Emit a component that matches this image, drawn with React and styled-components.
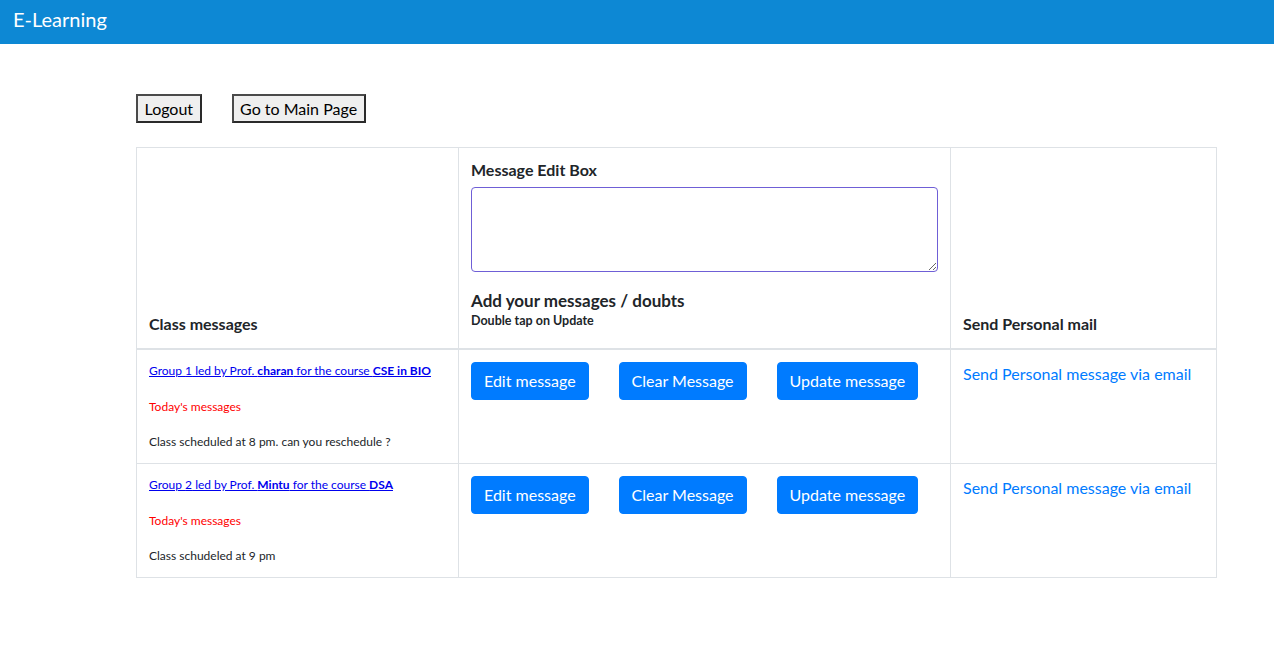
import React from "react";
import styled, { createGlobalStyle } from "styled-components";

const FONT = `Lato, "Noto Sans", "Liberation Sans", sans-serif`;

const Global = createGlobalStyle`
  html, body { margin: 0; padding: 0; background: #fff; }
  body {
    font-family: ${FONT};
    font-size: 16px;
    line-height: 1.5;
    color: #212529;
  }
  * { box-sizing: border-box; }
`;

const TopBar = styled.header`
  height: 44px;
  background: #0d88d4;
  display: flex;
  align-items: flex-start;
  padding: 4px 13px 0;
`;

const Brand = styled.div`
  color: #fff;
  font-size: 20px;
  line-height: 30px;
`;

const Main = styled.main`
  padding: 50px 0 0 136px;
`;

const ActionRow = styled.div`
  display: flex;
  gap: 30px;
  margin-bottom: 24px;
`;

const PlainButton = styled.button`
  font-family: ${FONT};
  font-size: 16px;
  line-height: 21px;
  color: #000;
  background: #efefef;
  border: 2px solid #4a4a4a;
  border-right-color: #2a2a2a;
  border-bottom-color: #2a2a2a;
  padding: 2px 6.5px;
  height: 29px;
  cursor: pointer;
`;

const Table = styled.table`
  width: 1080px;
  border-collapse: collapse;
  table-layout: fixed;
`;

const HeadCell = styled.th`
  border: 1px solid #dee2e6;
  border-bottom: 2px solid #dee2e6;
  padding: 12px;
  vertical-align: bottom;
  text-align: left;
  font-weight: 700;
`;

const Cell = styled.td`
  border: 1px solid #dee2e6;
  padding: 12px;
  vertical-align: top;
`;

const FieldLabel = styled.label`
  display: block;
  font-weight: 700;
  line-height: 20px;
`;

const EditBox = styled.textarea`
  display: block;
  width: 100%;
  height: 85px;
  margin-top: 7px;
  border: 1px solid #6f5fd6;
  border-radius: 4px;
  resize: vertical;
  font-family: ${FONT};
  font-size: 16px;
  outline: none;
`;

const SubTitle = styled.div`
  margin-top: 19px;
  font-size: 17px;
  font-weight: 700;
  line-height: 20px;
`;

const Hint = styled.div`
  font-size: 12.5px;
  font-weight: 700;
  line-height: 19px;
  margin-bottom: 6px;
`;

const MsgColumn = styled.div`
  display: flex;
  flex-direction: column;
  gap: 17.5px;
  font-size: 12px;
  line-height: 18px;
`;

const GroupLink = styled.a`
  color: #0000ee;
  text-decoration: underline;
  b { font-weight: 700; }
`;

const TodayLabel = styled.div`
  color: #ff0000;
`;

const MsgText = styled.div`
  color: #212529;
`;

const ButtonGroup = styled.div`
  display: flex;
  gap: 30px;
`;

const PrimaryButton = styled.button`
  font-family: ${FONT};
  font-size: 16px;
  line-height: 24px;
  padding: 6px 12px;
  border: 1px solid #007bff;
  border-radius: 4px;
  background: #007bff;
  color: #fff;
  cursor: pointer;
`;

const MailLink = styled.a`
  color: #007bff;
  text-decoration: none;
  line-height: 24px;
`;

const groups = [
  { id: 1, prof: "charan", course: "CSE in BIO", msg: "Class scheduled at 8 pm. can you reschedule ?" },
  { id: 2, prof: "Mintu", course: "DSA", msg: "Class schudeled at 9 pm" },
];

export default function App() {
  return (
    <>
      <Global />
      <TopBar>
        <Brand>E-Learning</Brand>
      </TopBar>
      <Main>
        <ActionRow>
          <PlainButton>Logout</PlainButton>
          <PlainButton>Go to Main Page</PlainButton>
        </ActionRow>
        <Table>
          <colgroup>
            <col style={{ width: 322 }} />
            <col style={{ width: 492 }} />
            <col style={{ width: 266 }} />
          </colgroup>
          <thead>
            <tr>
              <HeadCell>Class messages</HeadCell>
              <HeadCell>
                <FieldLabel htmlFor="msg">Message Edit Box</FieldLabel>
                <EditBox id="msg" />
                <SubTitle>Add your messages / doubts</SubTitle>
                <Hint>Double tap on Update</Hint>
              </HeadCell>
              <HeadCell>Send Personal mail</HeadCell>
            </tr>
          </thead>
          <tbody>
            {groups.map((g) => (
              <tr key={g.id}>
                <Cell>
                  <MsgColumn>
                    <div>
                      <GroupLink href="#">
                        Group {g.id} led by Prof. <b>{g.prof}</b> for the course <b>{g.course}</b>
                      </GroupLink>
                    </div>
                    <TodayLabel>Today's messages</TodayLabel>
                    <MsgText>{g.msg}</MsgText>
                  </MsgColumn>
                </Cell>
                <Cell>
                  <ButtonGroup>
                    <PrimaryButton>Edit message</PrimaryButton>
                    <PrimaryButton>Clear Message</PrimaryButton>
                    <PrimaryButton>Update message</PrimaryButton>
                  </ButtonGroup>
                </Cell>
                <Cell>
                  <MailLink href="#">Send Personal message via email</MailLink>
                </Cell>
              </tr>
            ))}
          </tbody>
        </Table>
      </Main>
    </>
  );
}
